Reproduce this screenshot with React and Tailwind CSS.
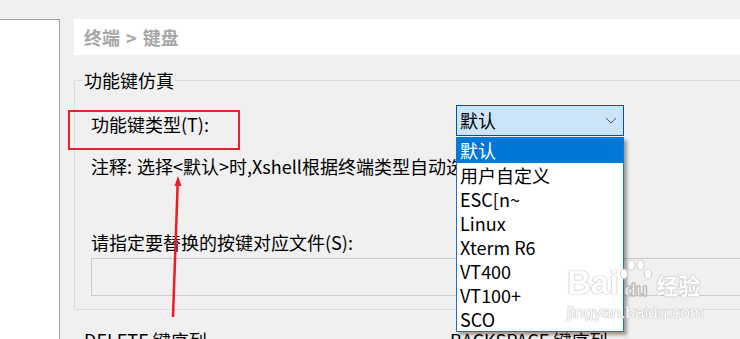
import React from 'react';

const options = ['用户自定义', 'ESC[n~', 'Linux', 'Xterm R6', 'VT400', 'VT100+', 'SCO'];

export default function App() {
  return (
    <div className="relative w-[740px] h-[339px] overflow-hidden bg-[#f0f0f0] text-black font-['Noto_Sans_CJK_SC','Microsoft_YaHei',sans-serif] text-[18px] flex">
      {/* left tree panel */}
      <div className="w-[60px] mt-[19px] shrink-0 bg-white border-t border-r border-[#a0a0a0]" />

      {/* right content */}
      <div className="flex-1 pl-[14px] pt-[19px] min-w-0">
        <div className="h-[36px] w-[680px] bg-white pl-[10px] flex items-center text-[18px] font-bold text-[#a6a6a6] [word-spacing:2px]">
          终端 &gt; 键盘
        </div>

        <fieldset className="mt-[13px] w-[700px] border border-[#dcdcdc] pb-[13px]">
          <legend className="ml-[8px] px-[1px] leading-[24px]">功能键仿真</legend>

          <div className="pl-[16px]">
            <div className="flex items-center pt-[13px]">
              <span className="w-[365px] pt-[6px] leading-[24px]">功能键类型(T):</span>
              <div className="w-[168px] h-[31px] border border-[#0054a6] bg-[#cce4f7] flex items-center justify-between pl-[3px] pr-[6px]">
                <span>默认</span>
                <svg width="12" height="7" viewBox="0 0 12 7" fill="none">
                  <path d="M1 1l5 5 5-5" stroke="#555" strokeWidth="1" />
                </svg>
              </div>
            </div>

            <div className="mt-[18px] leading-[24px] whitespace-nowrap [word-spacing:1px]">
              注释: 选择&lt;默认&gt;时,Xshell根据终端类型自动选择功能键类型。
            </div>

            <div className="mt-[52px] leading-[24px]">请指定要替换的按键对应文件(S):</div>
            <div className="mt-[4px] h-[38px] w-[660px] border border-[#cccccc] bg-[#f0f0f0]" />
          </div>
        </fieldset>

        <div className="mt-[18px] pl-[10px] flex leading-[24px] whitespace-nowrap">
          <span className="w-[366px]">DELETE 键序列</span>
          <span>BACKSPACE 键序列</span>
        </div>
      </div>

      {/* open dropdown list */}
      <div className="absolute left-[456px] top-[137px] w-[168px] h-[195px] bg-white border border-t-0 border-[#1874cd] shadow-[3px_3px_3px_rgba(0,0,0,0.35)]">
        <div className="h-[26px] bg-[#0078d7] text-white pl-[3px] leading-[26px]">默认</div>
        {options.map((o) => (
          <div key={o} className="h-[24px] pl-[3px] leading-[24px]">{o}</div>
        ))}
      </div>

      {/* watermark */}
      <div className="absolute left-[567px] top-[259px] text-white [text-shadow:0_0_1px_#aaa,0_0_1px_#aaa] font-['Liberation_Sans',sans-serif] pointer-events-none">
        <div className="flex items-end h-[40px]">
          <span className="text-[33px] font-bold leading-[33px]">Bai</span>
          <svg width="34" height="40" viewBox="0 0 34 40" className="ml-[1px]">
            <g fill="#fff" stroke="#bbb" strokeWidth="0.7">
              <ellipse cx="5" cy="15" rx="3.5" ry="5" />
              <ellipse cx="12.5" cy="6" rx="3.5" ry="5" />
              <ellipse cx="21.5" cy="6" rx="3.5" ry="5" />
              <ellipse cx="29" cy="15" rx="3.5" ry="5" />
            </g>
            <text x="17" y="37" textAnchor="middle" fontSize="19" fontWeight="bold" fill="#fff" stroke="#bbb" strokeWidth="0.5" fontFamily="Liberation Sans, sans-serif">du</text>
          </svg>
          <span className="ml-[3px] text-[22px] font-bold leading-[30px] font-['Noto_Sans_CJK_SC',sans-serif]">经验</span>
        </div>
        <div className="mt-[4px] text-[17px] leading-[20px]">jingyan.baidu.com</div>
      </div>

      {/* red annotation box */}
      <div className="absolute left-[68px] top-[110px] w-[172px] h-[40px] border-2 border-[#e8202a]" />

      {/* red arrow */}
      <svg className="absolute left-0 top-0" width="740" height="339" viewBox="0 0 740 339">
        <line x1="173" y1="317" x2="177.7" y2="183" stroke="#ed1c24" strokeWidth="2.5" />
        <polygon points="178,176 174.5,186 181.5,186" fill="#ed1c24" />
      </svg>
    </div>
  );
}
